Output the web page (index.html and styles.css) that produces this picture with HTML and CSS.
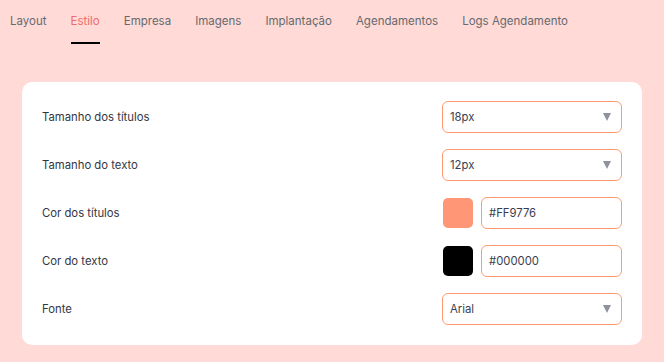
FILE: index.html
```html
<!DOCTYPE html>
<html lang="pt">
<head>
<meta charset="utf-8">
<link rel="stylesheet" href="styles.css">
</head>
<body>
<nav class="tabs">
  <span class="tab">Layout</span>
  <span class="tab active">Estilo</span>
  <span class="tab">Empresa</span>
  <span class="tab">Imagens</span>
  <span class="tab">Implantação</span>
  <span class="tab">Agendamentos</span>
  <span class="tab">Logs Agendamento</span>
</nav>
<main class="content">
  <section class="card">
    <div class="row">
      <span class="label">Tamanho dos títulos</span>
      <div class="select"><span>18px</span><span class="arrow"></span></div>
    </div>
    <div class="row">
      <span class="label">Tamanho do texto</span>
      <div class="select"><span>12px</span><span class="arrow"></span></div>
    </div>
    <div class="row">
      <span class="label">Cor dos títulos</span>
      <div class="color-field">
        <span class="swatch swatch-coral"></span>
        <div class="text-input">#FF9776</div>
      </div>
    </div>
    <div class="row">
      <span class="label">Cor do texto</span>
      <div class="color-field">
        <span class="swatch swatch-black"></span>
        <div class="text-input">#000000</div>
      </div>
    </div>
    <div class="row">
      <span class="label">Fonte</span>
      <div class="select"><span>Arial</span><span class="arrow"></span></div>
    </div>
  </section>
</main>
</body>
</html>
```
FILE: styles.css
```css
* { box-sizing: border-box; }
html, body {
  margin: 0;
  background: #ffdad6;
  font-family: Inter, "Noto Sans", sans-serif;
}
.tabs {
  display: flex;
  gap: 24px;
  padding: 13px 10px 0;
  font-size: 11.5px;
  color: #666a70;
}
.tab {
  line-height: 16px;
  padding-bottom: 13px;
  border-bottom: 2px solid transparent;
}
.tab.active {
  color: #f26b6b;
  border-bottom-color: #000;
}
.content {
  padding: 38px 22px 0 22px;
}
.card {
  background: #fff;
  border-radius: 10px;
  padding: 19px 20px 20px;
  display: flex;
  flex-direction: column;
  gap: 16px;
}
.row {
  display: flex;
  align-items: center;
  justify-content: space-between;
  height: 32px;
}
.label {
  font-size: 11.3px;
  color: #33363f;
}
.select {
  width: 180px;
  height: 32px;
  border: 1px solid #ff9a72;
  border-radius: 6px;
  display: flex;
  align-items: center;
  justify-content: space-between;
  padding: 0 10px 0 7px;
  font-size: 11.3px;
  color: #3a3d4f;
}
.arrow {
  width: 0;
  height: 0;
  border-left: 4px solid transparent;
  border-right: 4px solid transparent;
  border-top: 8px solid #8e929c;
}
.color-field {
  display: flex;
  align-items: center;
  gap: 8px;
}
.swatch {
  width: 30px;
  height: 30px;
  border-radius: 5px;
}
.swatch-coral { background: #ff9776; }
.swatch-black { background: #000; }
.text-input {
  width: 141px;
  height: 32px;
  border: 1px solid #ff9a72;
  border-radius: 6px;
  display: flex;
  align-items: center;
  padding: 0 7px;
  font-size: 11.3px;
  color: #3a3d4f;
}
```
